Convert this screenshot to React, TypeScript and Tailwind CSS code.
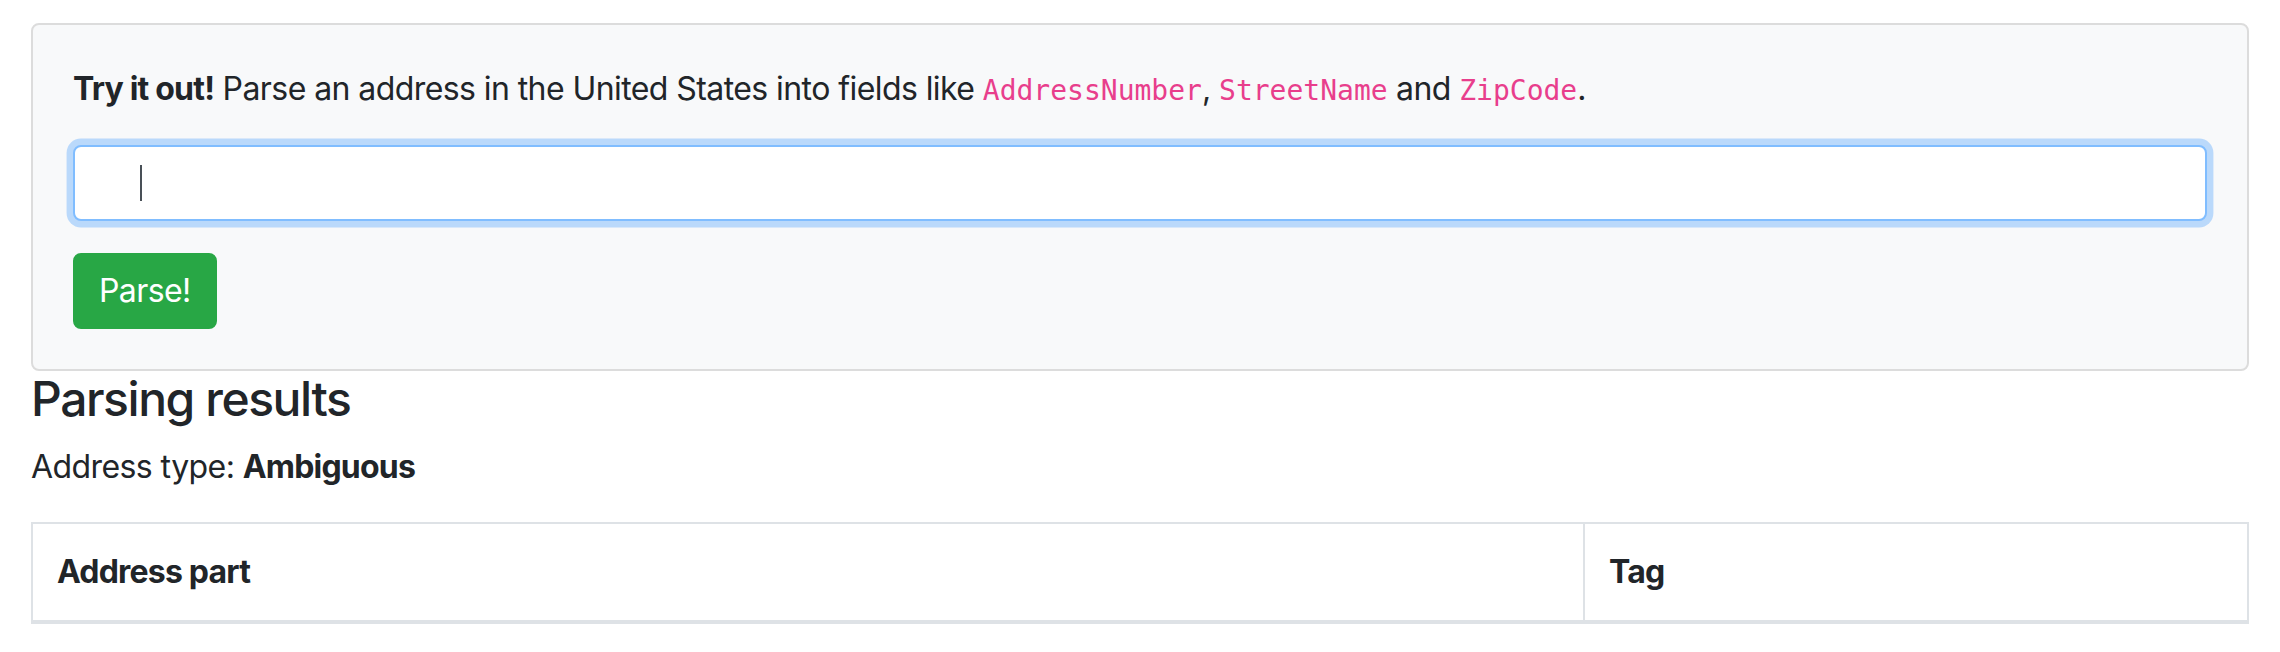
// Address parser demo: the "try it out" card with a focused input and a
// Parse button, then the parsing results heading, address type and the
// empty results table header.

const sans = "font-['Inter','Roboto','Liberation_Sans',sans-serif]";
const mono = "font-['DejaVu_Sans_Mono','Liberation_Mono',monospace]";

function Code({ children }: { children: React.ReactNode }) {
  return (
    <code className={`${mono} text-[28px] leading-none tracking-normal text-[#e83e8c]`}>{children}</code>
  );
}

export default function App() {
  return (
    <div className={`min-h-screen bg-white px-[31px] pt-[23px] text-[#212529] ${sans}`}>
      <div className="rounded-[8px] border-2 border-[#dcdcdc] bg-[#f8f9fa] p-[40px]">
        <p className="mb-[32px] text-[32px] leading-[48px] tracking-[-0.018em]">
          <strong className="font-bold tracking-[-0.025em]">Try it out!</strong> Parse an address in the
          United States into fields like <Code>AddressNumber</Code>, <Code>StreetName</Code> and{" "}
          <Code>ZipCode</Code>.
        </p>

        <div className="mb-[32px] flex h-[76px] items-center rounded-[8px] border-2 border-[#80bdff] bg-white pl-[65px] shadow-[0_0_0_6.4px_rgba(0,123,255,0.25)]">
          <span aria-hidden className="block h-[36px] w-[2px] bg-[#495057]" />
        </div>

        <button
          type="button"
          className="block h-[76px] rounded-[8px] border-2 border-[#28a745] bg-[#28a745] px-[24px] text-[32px] leading-[48px] tracking-[-0.018em] text-white"
        >
          Parse!
        </button>
      </div>

      <h4 className="mb-[16px] text-[48px] font-medium leading-[56px] tracking-[-0.03em]">Parsing results</h4>
      <p className="mb-[31px] text-[32px] leading-[48px] tracking-[-0.018em]">
        Address type: <strong className="font-bold tracking-[-0.025em]">Ambiguous</strong>
      </p>

      <table className="w-full border-collapse border-2 border-[#dee2e6]">
        <thead>
          <tr>
            <th className="w-[1552px] border-2 border-b-4 border-[#dee2e6] p-[24px] text-left text-[32px] font-bold leading-[48px] tracking-[-0.025em]">
              Address part
            </th>
            <th className="border-2 border-b-4 border-[#dee2e6] p-[24px] text-left text-[32px] font-bold leading-[48px] tracking-[-0.025em]">
              Tag
            </th>
          </tr>
        </thead>
      </table>
    </div>
  );
}
